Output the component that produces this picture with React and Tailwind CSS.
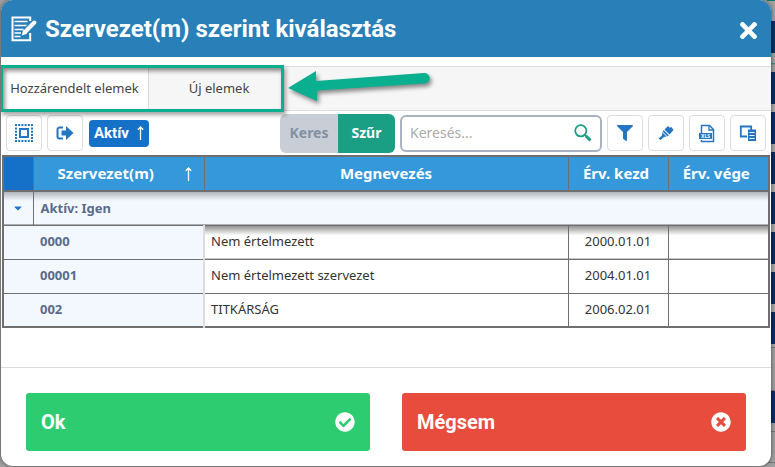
import React, { useState } from 'react';
import { FaTimes, FaCheckCircle, FaTimesCircle, FaFilter, FaCaretDown } from 'react-icons/fa';

const rows = [
  { code: '0000', name: 'Nem értelmezett', from: '2000.01.01', to: '' },
  { code: '00001', name: 'Nem értelmezett szervezet', from: '2004.01.01', to: '' },
  { code: '002', name: 'TITKÁRSÁG', from: '2006.02.01', to: '' },
];

const EditIcon = () => (
  <svg width="26" height="26" viewBox="0 0 26 26" fill="none" stroke="#fff" className="shrink-0">
    <path d="M19.200 5V1.500H1.500v22.800h17.700V17" strokeWidth="2" />
    <path d="M3.500 5.500h13M3.500 9.500h12M3.500 13.500h9M3.500 17h6.500M3.500 20.500h6" strokeWidth="1.600" />
    <path d="M23.300 6.500 14.500 15.500" strokeWidth="4" strokeLinecap="round" />
    <path d="m12.200 13.800 4 4-5.400 1.700z" fill="#fff" stroke="none" />
  </svg>
);

const SelectAllIcon = () => (
  <svg width="20" height="20" viewBox="0 0 20 20" fill="none" stroke="#2376c4">
    <path d="M1 2h18M1 18h18" strokeWidth="2" strokeDasharray="2 1.200" />
    <path d="M2 4.500v12M18 4.500v12" strokeWidth="2" strokeDasharray="2 1.200" />
    <rect x="6" y="6" width="8" height="8" strokeWidth="2" />
  </svg>
);

const ExportIcon = () => (
  <svg width="18" height="16" viewBox="0 0 18 16">
    <path d="M7 2.500H3.500a2 2 0 0 0-2 2v7a2 2 0 0 0 2 2H7" fill="none" stroke="#2376c4" strokeWidth="2" />
    <path d="M5.500 5.500H10V1L17.500 8 10 15v-4.500H5.500z" fill="#2376c4" />
  </svg>
);

const ArrowUp = () => (
  <svg width="7" height="14" viewBox="0 0 7 14" fill="none" stroke="#fff" strokeWidth="1.300">
    <path d="M3.500 14V1M.8 3.800 3.500 1l2.700 2.800" />
  </svg>
);

const SearchIcon = () => (
  <svg width="18" height="18" viewBox="0 0 18 18" fill="none" stroke="#1a9f85">
    <circle cx="6.800" cy="6.800" r="5.600" strokeWidth="1.800" />
    <path d="m11 11 2 2" strokeWidth="1.800" />
    <path d="m12 12 4.500 4.500" strokeWidth="3" />
  </svg>
);

const BrushIcon = () => (
  <svg width="16" height="16" viewBox="0 0 16 16" fill="#2376c4">
    <path d="M8.500 2.500 10 1l1.800 1.800L13.500 2 15.500 5l-4 4.500-5-5z" />
    <path d="m5.800 5.200 5 5-1.300 1.300-5-5z" />
    <path d="m4.200 7.300 4.300 4.200-2.500.5-3.500 3L.5 13.500 4 10.500z" />
  </svg>
);

const XlsIcon = () => (
  <svg width="16" height="19" viewBox="0 0 16 19">
    <path d="M2.500 9V1.500h8l4 4v12h-12V16" fill="none" stroke="#2376c4" strokeWidth="1.500" />
    <path d="M10 1.500V6h4.500" fill="none" stroke="#2376c4" strokeWidth="1.300" />
    <rect x="0" y="9" width="13" height="6" fill="#2376c4" />
    <text x="6.500" y="14" textAnchor="middle" fontSize="5" fontWeight="700" fill="#fff">XLS</text>
  </svg>
);

const ColumnsIcon = () => (
  <svg width="18" height="16" viewBox="0 0 18 16">
    <path d="M8 11.500H1.800V1.500h10.400V5" fill="none" stroke="#2376c4" strokeWidth="1.800" />
    <path d="M9 4.500h8V16H9z" fill="#2376c4" />
    <path d="M10.500 7.500h5M10.500 10.500h5M10.500 13.500h5" stroke="#fff" strokeWidth="1" />
  </svg>
);

const ToolButton = ({ label, children }) => (
  <button
    aria-label={label}
    className="flex h-9 w-9 shrink-0 items-center justify-center rounded border border-[#dcdcdc] bg-white text-[#2376c4]"
  >
    {children}
  </button>
);

const PointerArrow = () => (
  <svg
    width="150"
    height="44"
    viewBox="0 0 150 44"
    className="pointer-events-none absolute top-1 left-[284px] drop-shadow-[2px_3px_2px_rgba(0,0,0,0.45)]"
  >
    <path d="M3 18 31 1v10l108-8a5 5 0 0 1 1 10.500L32 20.500V31z" fill="#0aaf8f" />
  </svg>
);

// slice of the dimmed page showing past the right edge of the dialog
const BackdropStrip = () => (
  <div className="absolute inset-y-0 right-0 w-2">
    <div className="h-[21px] border-t border-[#0b7a66]" />
    <div className="h-8 bg-[#0b2c66]" />
    <div className="h-[19px] bg-linear-to-b from-transparent from-50% via-[#0b8a70] via-50% to-transparent to-65%" />
    <div className="h-[275px] bg-[repeating-linear-gradient(#0b2c66_0_32px,#a9a9a9_32px_40px)]" />
    <div className="h-[44px] border-y border-[#777]" />
    <div className="h-8 bg-[#0b2c66]" />
    <div className="mt-2 h-8 border-y border-[#777]" />
  </div>
);

const App = () => {
  const [query, setQuery] = useState('');

  return (
    <div className="relative min-h-screen overflow-hidden bg-[#a0a0a0] pr-1 pb-px pl-px font-['Noto_Sans',sans-serif]">
      <BackdropStrip />
      <div className="relative overflow-hidden rounded-xl bg-white shadow-[0_0_4px_rgba(0,0,0,0.6)]">
        <header className="flex h-[57px] items-center gap-2 bg-[#2980b9] pr-2.5 pl-2.5 text-white">
          <EditIcon />
          <h1 className="flex-1 font-['Roboto',sans-serif] text-2xl font-bold">Szervezet(m) szerint kiválasztás</h1>
          <button aria-label="Bezárás" className="pt-1">
            <FaTimes size={25} />
          </button>
        </header>

        <main className="h-[311px] border-b border-[#dcdcdc] pt-[9px]">
          <div className="relative">
            <nav className="flex h-[45px] border-y border-[#dcdcdc] bg-[#f6f6f6] text-[13px] text-[#444]">
              <button className="w-[148px] border-r border-[#dcdcdc] bg-white">Hozzárendelt elemek</button>
              <button className="w-[140px]">Új elemek</button>
            </nav>
            <div className="pointer-events-none absolute -top-px -left-px h-[47px] w-[284px] border-[3px] border-[#0aaf8f] shadow-[2px_3px_4px_rgba(0,0,0,0.35),inset_2px_3px_4px_rgba(0,0,0,0.45)]" />
            <PointerArrow />
          </div>

          <div className="flex h-11 items-center gap-[5px] px-[5px]">
            <ToolButton label="Összes kijelölése"><SelectAllIcon /></ToolButton>
            <ToolButton label="Export"><ExportIcon /></ToolButton>
            <button className="ml-px flex h-[27px] items-center gap-2 rounded bg-[#1570c8] px-[5px] font-['Roboto',sans-serif] text-[15px] font-bold text-white">
              Aktív <ArrowUp />
            </button>
            <div className="ml-auto flex h-[39px] overflow-hidden rounded-md text-sm font-bold">
              <button className="w-[58px] bg-[#c9ced6] text-[#8290a3]">Keres</button>
              <button className="w-[57px] bg-[#1a9f85] text-white">Szűr</button>
            </div>
            <label className="flex h-[37px] w-[202px] items-center rounded-md border-2 border-[#a9b2c0] px-2">
              <input
                aria-label="Keresés"
                placeholder="Keresés..."
                value={query}
                onChange={(e) => setQuery(e.target.value)}
                className="min-w-0 flex-1 text-sm outline-none placeholder:text-[#aaa]"
              />
              <SearchIcon />
            </label>
            <ToolButton label="Szűrő"><FaFilter size={16} /></ToolButton>
            <ToolButton label="Formázás"><BrushIcon /></ToolButton>
            <ToolButton label="XLS"><XlsIcon /></ToolButton>
            <ToolButton label="Oszlopok"><ColumnsIcon /></ToolButton>
          </div>

          <div className="pr-px pl-px">
            <table className="w-full table-fixed border-collapse border-2 border-[#6f6f6f] text-[13px] text-[#333]">
              <colgroup>
                <col className="w-[30px]" />
                <col className="w-[171px]" />
                <col />
                <col className="w-[100px]" />
                <col className="w-[101px]" />
              </colgroup>
              <thead>
                <tr className="h-[35px] border-b-2 border-[#6f6f6f] bg-[#3498db] text-[15px] text-white">
                  <th className="border-r border-[#6f6f6f] bg-[#1570c8]" />
                  <th className="border-r border-[#6f6f6f]">
                    <div className="flex items-center justify-between pr-3 pl-6">
                      Szervezet(m) <ArrowUp />
                    </div>
                  </th>
                  <th className="border-r border-[#6f6f6f]">Megnevezés</th>
                  <th className="border-r border-[#6f6f6f] pr-1">Érv. kezd</th>
                  <th className="pr-1">Érv. vége</th>
                </tr>
              </thead>
              <tbody>
                <tr className="h-[34px] border-b border-[#6f6f6f] bg-[#f3f8ff] bg-linear-to-b from-black/30 to-transparent to-30%">
                  <td className="border-r border-[#6f6f6f] text-[#2376c4]">
                    <FaCaretDown size={12} className="mx-auto" />
                  </td>
                  <td colSpan={4} className="px-[7px] font-bold text-[#5b6b8a]">Aktív: Igen</td>
                </tr>
                {rows.map((row, i) => {
                  const shade = i === 0 ? 'bg-linear-to-b from-black/45 to-transparent to-30%' : '';
                  return (
                    <tr key={row.code} className="h-[34px] border-b border-[#6f6f6f]">
                      <td className="bg-[#f3f8ff]" />
                      <td className="border-r-2 border-r-[#dcdcdc] bg-[#f3f8ff] px-[7px] font-bold text-[#5b6b8a]">{row.code}</td>
                      <td className={`border-r border-r-[#6f6f6f] px-1.5 ${shade}`}>{row.name}</td>
                      <td className={`border-r border-r-[#6f6f6f] text-center ${shade}`}>{row.from}</td>
                      <td className={shade}>{row.to}</td>
                    </tr>
                  );
                })}
              </tbody>
            </table>
          </div>
        </main>

        <footer className="grid grid-cols-2 gap-8 px-[25px] pt-[25px] pb-[15px] font-['Roboto',sans-serif] text-xl font-bold text-white">
          <button className="flex h-[58px] items-center justify-between rounded-[3px] bg-[#2ecc71] px-[15px]">
            Ok <FaCheckCircle />
          </button>
          <button className="flex h-[58px] items-center justify-between rounded-[3px] bg-[#e74c3c] px-[15px]">
            Mégsem <FaTimesCircle />
          </button>
        </footer>
      </div>
    </div>
  );
};

export default App;
